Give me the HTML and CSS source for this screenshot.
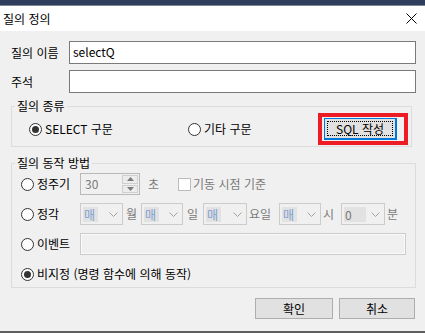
FILE: index.html
```html
<!DOCTYPE html>
<html lang="ko">
<head>
  <meta charset="UTF-8" />
  <title>질의 정의</title>
  <link rel="stylesheet" href="styles.css">
</head>
<body>
  <div class="topbar"></div>
  <div class="titlebar">
    <span class="title">질의 정의</span>
    <svg class="close" width="11" height="11" viewBox="0 0 11 11">
      <path d="M0.5 0.5 L10.5 10.5 M10.5 0.5 L0.5 10.5" stroke="#000" stroke-width="1" fill="none"/>
    </svg>
  </div>

  <div class="dialog">
    <div class="field">
      <label>질의 이름</label>
      <div class="input">selectQ</div>
    </div>
    <div class="field">
      <label>주석</label>
      <div class="input"></div>
    </div>

    <fieldset class="group group-kind">
      <legend>질의 종류</legend>
      <div class="kind-row">
        <div class="choice choice-select"><span class="radio checked"></span><span>SELECT 구문</span></div>
        <div class="choice choice-etc"><span class="radio"></span><span>기타 구문</span></div>
        <div class="highlight">
          <button class="sql-btn"><span class="focus">SQL 작성</span></button>
        </div>
      </div>
    </fieldset>

    <fieldset class="group group-mode">
      <legend>질의 동작 방법</legend>

      <div class="opt">
        <div class="opt-label"><span class="radio"></span><span>정주기</span></div>
        <div class="spin">
          <span class="spin-val">30</span>
          <div class="spin-btns">
            <span class="spin-up"><svg width="7" height="4" viewBox="0 0 7 4"><path d="M0 4 L3.5 0 L7 4Z" fill="#7a7a7a"/></svg></span>
            <span class="spin-down"><svg width="7" height="4" viewBox="0 0 7 4"><path d="M0 0 L3.5 4 L7 0Z" fill="#7a7a7a"/></svg></span>
          </div>
        </div>
        <span class="unit unit-sec">초</span>
        <span class="check"></span>
        <span class="dim check-text">기동 시점 기준</span>
      </div>

      <div class="opt">
        <div class="opt-label"><span class="radio"></span><span>정각</span></div>
        <div class="combo combo-a"><span class="val">매</span><svg class="chev" width="9" height="5" viewBox="0 0 9 5"><path d="M0.5 0.5 L4.5 4.5 L8.5 0.5" stroke="#a0a0a0" fill="none"/></svg></div>
        <span class="unit u-mon">월</span>
        <div class="combo combo-b"><span class="val">매</span><svg class="chev" width="9" height="5" viewBox="0 0 9 5"><path d="M0.5 0.5 L4.5 4.5 L8.5 0.5" stroke="#a0a0a0" fill="none"/></svg></div>
        <span class="unit u-day">일</span>
        <div class="combo combo-c"><span class="val">매</span><svg class="chev" width="9" height="5" viewBox="0 0 9 5"><path d="M0.5 0.5 L4.5 4.5 L8.5 0.5" stroke="#a0a0a0" fill="none"/></svg></div>
        <span class="unit u-week">요일</span>
        <div class="combo combo-b"><span class="val">매</span><svg class="chev" width="9" height="5" viewBox="0 0 9 5"><path d="M0.5 0.5 L4.5 4.5 L8.5 0.5" stroke="#a0a0a0" fill="none"/></svg></div>
        <span class="unit u-hour">시</span>
        <div class="combo combo-c"><span class="val val-num">0</span><svg class="chev" width="9" height="5" viewBox="0 0 9 5"><path d="M0.5 0.5 L4.5 4.5 L8.5 0.5" stroke="#a0a0a0" fill="none"/></svg></div>
        <span class="unit u-min">분</span>
      </div>

      <div class="opt">
        <div class="opt-label"><span class="radio"></span><span>이벤트</span></div>
        <div class="event-box"></div>
      </div>

      <div class="opt">
        <div class="opt-label opt-wide"><span class="radio checked"></span><span>비지정 (명령 함수에 의해 동작)</span></div>
      </div>
    </fieldset>

    <div class="actions">
      <button class="btn btn-ok">확인</button>
      <button class="btn btn-cancel">취소</button>
    </div>
  </div>
</body>
</html>
```

FILE: styles.css
```css
body {
  margin: 0;
  font-family: "Noto Sans CJK KR", "Malgun Gothic", sans-serif;
  font-size: 12px;
  color: #000;
  background: #f0f0f0;
}
.topbar {
  height: 5px;
  background: #2f3e5c;
  border-bottom: 1px solid #7d8694;
}
.titlebar {
  height: 25px;
  background: #fff;
  display: flex;
  align-items: center;
  justify-content: space-between;
  padding: 0 8px 0 3px;
}
.title {
  line-height: 14px;
}
.dialog {
  height: 302px;
  box-sizing: border-box;
  padding: 10px 9px 0 11px;
  border-bottom: 2px solid #5f5f5f;
}
.field {
  display: flex;
  align-items: center;
  margin-bottom: 6px;
}
.field label {
  width: 58px;
  line-height: 14px;
}
.field .input {
  flex: 1;
  height: 23px;
  box-sizing: border-box;
  border: 1px solid #7a7a7a;
  background: #fff;
  padding-left: 3px;
  line-height: 20px;
}
.group {
  margin: 0;
  padding: 0;
  border: 1px solid #dcdcdc;
  min-width: 0;
}
.group legend {
  padding: 0 2px;
  margin-left: 3px;
  line-height: 14px;
}
.group-kind {
  margin-right: 4px;
}
.kind-row {
  display: flex;
  align-items: center;
  padding: 0 0 1px 17px;
}
.choice {
  display: flex;
  align-items: center;
  gap: 3px;
  line-height: 14px;
}
.choice-select {
  width: 159px;
}
.choice-etc {
  width: 130px;
}
.radio {
  width: 13px;
  height: 13px;
  box-sizing: border-box;
  border: 1px solid #333;
  border-radius: 50%;
  background: #fff;
  position: relative;
  flex: none;
}
.radio.checked::after {
  content: "";
  position: absolute;
  inset: 2px;
  border-radius: 50%;
  background: #333;
}
.highlight {
  border: 4px solid #ed1c24;
  padding: 1px 7px 1px 2px;
}
.sql-btn {
  display: block;
  width: 73px;
  height: 22px;
  box-sizing: border-box;
  padding: 2px;
  background: #e1e1e1;
  border: 1px solid #0078d7;
  border-right-width: 2px;
  border-bottom-width: 2px;
  font: inherit;
}
.sql-btn .focus {
  display: flex;
  align-items: center;
  justify-content: center;
  height: 100%;
  box-sizing: border-box;
  border: 1px dotted #000;
  line-height: 14px;
}
.group-mode {
  margin-top: 9px;
}
.opt {
  display: flex;
  align-items: center;
  height: 22px;
  padding-left: 9px;
  margin-bottom: 8px;
  line-height: 14px;
}
.group-mode legend + .opt {
  margin-top: 3px;
}
.opt:last-child {
  margin-bottom: 2px;
}
.opt-label {
  width: 59px;
  display: flex;
  align-items: center;
  gap: 3px;
}
.opt-wide {
  width: auto;
}
.dim,
.unit {
  color: #7a7a7a;
}
.spin {
  width: 60px;
  height: 22px;
  box-sizing: border-box;
  border: 1px solid #b9b9b9;
  display: flex;
  align-items: center;
  justify-content: space-between;
  padding: 1px;
}
.spin-val {
  color: #7a7a7a;
  padding-left: 3px;
}
.spin-btns {
  width: 16px;
  height: 18px;
  display: flex;
  flex-direction: column;
  gap: 1px;
}
.spin-btns span {
  flex: 1;
  border: 1px solid #cfcfcf;
  background: #ececec;
  display: flex;
  align-items: center;
  justify-content: center;
}
.unit-sec {
  width: 30px;
  padding-left: 8px;
}
.check {
  width: 13px;
  height: 13px;
  box-sizing: border-box;
  border: 1px solid #bcbcbc;
  background: #fff;
  margin-right: 2px;
}
.combo {
  height: 22px;
  box-sizing: border-box;
  border: 1px solid #cccccc;
  display: flex;
  align-items: center;
  justify-content: space-between;
  padding: 0 4px 0 2px;
}
.combo-a { width: 43px; }
.combo-b { width: 42px; }
.combo-c { width: 44px; }
.combo .val {
  background: #e2e2e2;
  color: #7e9fce;
  width: 14px;
  height: 15px;
  line-height: 15px;
  padding-left: 1px;
}
.combo .val-num {
  width: 21px;
  color: #7a7a7a;
}
.u-mon { width: 15px; padding-left: 3px; }
.u-day { width: 16px; padding-left: 4px; }
.u-week { width: 30px; padding-left: 2px; }
.u-hour { width: 18px; padding-left: 2px; }
.u-min { padding-left: 2px; }
.event-box {
  width: 326px;
  height: 22px;
  box-sizing: border-box;
  border: 1px solid #cccccc;
  box-shadow: inset 0 0 0 1px #fafafa;
}
.actions {
  display: flex;
  justify-content: flex-end;
  gap: 6px;
  margin-top: 10px;
  margin-right: 1px;
}
.btn {
  height: 21px;
  box-sizing: border-box;
  background: #e1e1e1;
  border: 1px solid #adadad;
  font: inherit;
  line-height: 14px;
  padding: 0;
}
.btn-ok { width: 78px; }
.btn-cancel { width: 76px; }
```
